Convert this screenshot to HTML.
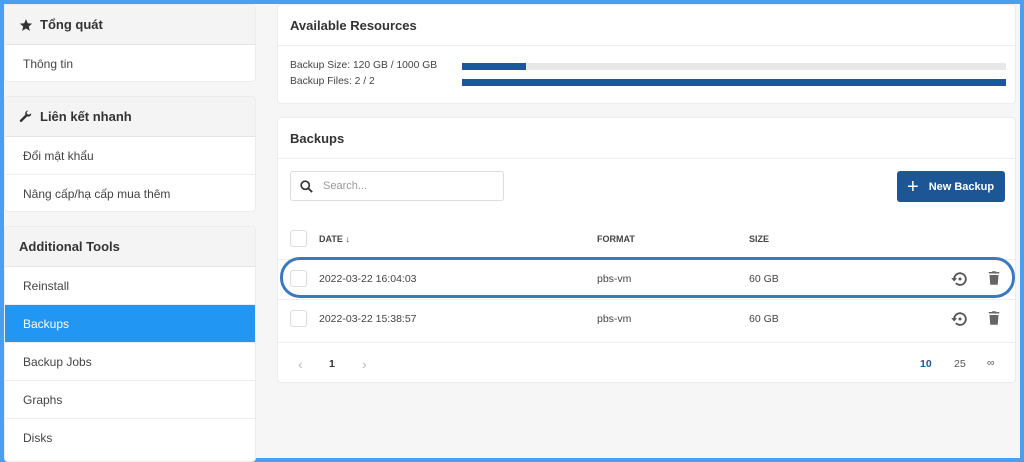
<!DOCTYPE html>
<html><head><style>
*{box-sizing:border-box;margin:0;padding:0}
body{width:1024px;height:462px;overflow:hidden;background:#4a9ff0;font-family:"Liberation Sans","Noto Sans CJK SC",sans-serif;color:#333;position:relative}
.bg{position:absolute;left:4px;top:4px;right:4px;bottom:4px;background:#f6f6f6}
.card{position:absolute;background:#fff;border:1px solid #ececec;border-radius:4px;overflow:hidden}
.sh{background:#f4f4f4;height:40px;border-bottom:1px solid #e4e4e4;font-weight:bold;font-size:13px;padding:0 14px;display:flex;align-items:center;gap:7px;color:#333}
.it{height:38px;border-bottom:1px solid #eee;font-size:12px;padding-left:18px;display:flex;align-items:center;color:#444}
.it:last-child{border-bottom:none}
.act{background:#2196f3;color:#fff}
.mh{height:41px;border-bottom:1px solid #eee;font-size:13px;font-weight:bold;padding-left:12px;display:flex;align-items:center;color:#333}
.t{position:absolute;font-size:10.5px;color:#444}
.r{font-size:10.3px}
.bar{position:absolute;left:184px;width:544px;height:7px;background:#e8e8e8}
.cb{position:absolute;left:12px;width:17px;height:17px;border:1px solid #ddd;border-radius:3px;background:#fff}
.hd{position:absolute;font-size:9px;font-weight:bold;color:#444}
.line{position:absolute;left:0;right:0;height:1px;background:#eee}
</style></head><body>
<div class="bg"></div>
<div class="card" style="left:4px;top:4px;width:252px;height:78px;border-top-left-radius:0">
<div class="sh"><svg width="14" height="14" viewBox="0 0 24 24"><path d="M12 2l3 7 7.5.6-5.7 5 1.8 7.4L12 18l-6.6 4 1.8-7.4L1.5 9.6 9 9z" fill="#333"/></svg>Tổng quát</div>
<div class="it">Thông tin</div></div>
<div class="card" style="left:4px;top:96px;width:252px;height:116px">
<div class="sh"><svg width="14" height="14" viewBox="0 0 24 24"><path d="M21 6a5 5 0 0 1-7 5L5 20a2 2 0 0 1-3-3l9-9a5 5 0 0 1 5-7l-3 3 1 3 3 1z" fill="#333"/></svg>Liên kết nhanh</div>
<div class="it">Đổi mật khẩu</div><div class="it">Nâng cấp/hạ cấp mua thêm</div></div>
<div class="card" style="left:4px;top:226px;width:252px;height:236px">
<div class="sh">Additional Tools</div>
<div class="it">Reinstall</div><div class="it act">Backups</div><div class="it">Backup Jobs</div><div class="it">Graphs</div><div class="it">Disks</div></div>

<div class="card" style="left:277px;top:4px;width:739px;height:100px">
<div class="mh">Available Resources</div>
<div class="t r" style="left:12px;top:55px">Backup Size: 120 GB / 1000 GB</div>
<div class="t r" style="left:12px;top:71px">Backup Files: 2 / 2</div>
<div class="bar" style="top:58px"><div style="width:64px;height:7px;background:#1c5694"></div></div>
<div class="bar" style="top:74px;background:#1c5694"></div>
</div>

<div class="card" style="left:277px;top:117px;width:739px;height:266px">
<div class="mh">Backups</div>
<div style="position:absolute;left:12px;top:53px;width:214px;height:30px;border:1px solid #ddd;border-radius:3px">
<svg style="position:absolute;left:8px;top:7px" width="15" height="15" viewBox="0 0 24 24"><circle cx="10" cy="10" r="6.5" fill="none" stroke="#333" stroke-width="2.6"/><path d="M15 15l6 6" stroke="#333" stroke-width="3"/></svg>
<span style="position:absolute;left:32px;top:8px;font-size:11px;color:#999">Search...</span></div>
<div style="position:absolute;left:619px;top:53px;width:108px;height:31px;background:#1c5694;border-radius:3px;color:#fff;font-size:11px;font-weight:bold;display:flex;align-items:center;padding-left:10px;gap:10px"><span style="font-size:20px;font-weight:normal;line-height:1">+</span>New Backup</div>
<div class="cb" style="top:112px"></div>
<div class="hd" style="left:41px;top:116px">DATE ↓</div>
<div class="hd" style="left:319px;top:116px">FORMAT</div>
<div class="hd" style="left:471px;top:116px">SIZE</div>
<div class="line" style="top:141px"></div>
<div class="cb" style="top:152px"></div>
<div class="t" style="left:41px;top:155px">2022-03-22 16:04:03</div>
<div class="t" style="left:319px;top:155px">pbs-vm</div>
<div class="t" style="left:471px;top:155px">60 GB</div>
<div class="line" style="top:181px"></div>
<div class="cb" style="top:192px"></div>
<div class="t" style="left:41px;top:195px">2022-03-22 15:38:57</div>
<div class="t" style="left:319px;top:195px">pbs-vm</div>
<div class="t" style="left:471px;top:195px">60 GB</div>
<div class="line" style="top:224px"></div>
<div class="t" style="left:20px;top:238px;color:#bbb;font-size:14px">‹</div>
<div class="t" style="left:51px;top:240px;font-weight:bold;color:#333">1</div>
<div class="t" style="left:84px;top:238px;color:#bbb;font-size:14px">›</div>
<div class="t" style="left:642px;top:240px;font-weight:bold;color:#1c5694">10</div>
<div class="t" style="left:676px;top:240px;color:#555">25</div>
<div class="t" style="left:709px;top:239px;color:#555">∞</div>
</div>
<svg style="position:absolute;left:950px;top:269px" width="20" height="20" viewBox="0 0 24 24"><path d="M5 12a7 7 0 1 1 2 5" fill="none" stroke="#555" stroke-width="2.2"/><path d="M1.5 11h7l-3.5 4z" fill="#555"/><circle cx="12" cy="12" r="1.8" fill="#555"/></svg>
<svg style="position:absolute;left:985px;top:269px" width="18" height="18" viewBox="0 0 24 24"><path d="M5 4h4l1-1h4l1 1h4v2H5zM6 8h12l-1 13H7z" fill="#666"/></svg>
<svg style="position:absolute;left:950px;top:309px" width="20" height="20" viewBox="0 0 24 24"><path d="M5 12a7 7 0 1 1 2 5" fill="none" stroke="#555" stroke-width="2.2"/><path d="M1.5 11h7l-3.5 4z" fill="#555"/><circle cx="12" cy="12" r="1.8" fill="#555"/></svg>
<svg style="position:absolute;left:985px;top:309px" width="18" height="18" viewBox="0 0 24 24"><path d="M5 4h4l1-1h4l1 1h4v2H5zM6 8h12l-1 13H7z" fill="#666"/></svg>
<div style="position:absolute;left:280px;top:257px;width:735px;height:41px;border:3px solid #3a78c0;border-radius:20px"></div>
</body></html>
